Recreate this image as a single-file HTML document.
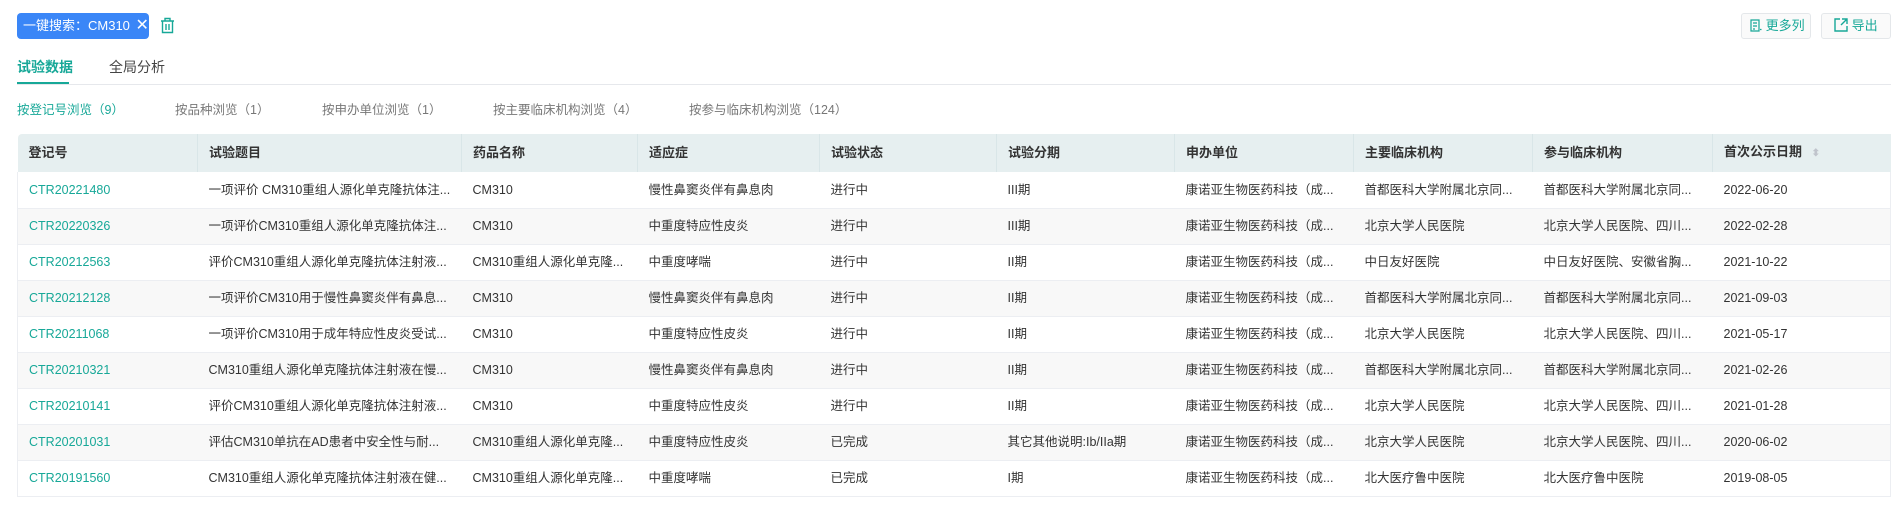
<!DOCTYPE html>
<html><head><meta charset="utf-8"><style>
*{margin:0;padding:0;box-sizing:border-box}
body{width:1903px;height:515px;background:#fff;font-family:"Liberation Sans","Noto Sans CJK SC",sans-serif;color:#333;position:relative;overflow:hidden}
.abs{position:absolute}
.tag{left:17px;top:13px;width:132px;height:26px;background:#3a86f7;border-radius:4px;color:#fff;font-size:13px;line-height:26px;padding-left:6px;white-space:nowrap}
.btn{top:13px;height:26px;border:1px solid #e4e7ea;border-radius:3px;background:#fafafa;color:#17a898;font-size:13px;line-height:24px;white-space:nowrap}
.tab{top:57px;font-size:14px}
.sub{top:99px;font-size:12.5px;color:#777;white-space:nowrap}
table{position:absolute;left:17px;top:134px;width:1873px;border-collapse:collapse;table-layout:fixed;font-size:12.5px}
th{height:38px;background:#e6eff0;text-align:left;font-weight:bold;color:#333;padding-left:11px;border-left:1px solid #d9e6e8;font-size:13px;line-height:18px;vertical-align:middle}
th:first-child{border-left:none;border-top-left-radius:4px}
td{height:36px;padding-left:11px;border-bottom:1px solid #eceef2;white-space:nowrap;overflow:hidden;color:#333;line-height:18px;vertical-align:middle}
td span{display:inline-block;vertical-align:middle;line-height:18px}
tr:nth-child(odd) td{background:#f8f8f8}
td:first-child{color:#17a898;border-left:1px solid #eceef2}
td:last-child{border-right:1px solid #eceef2}
</style></head><body>
<div class="abs tag">一键搜索：CM310 <span style="font-size:16px;margin-left:2px">✕</span></div>
<svg class="abs" style="left:160px;top:17px" width="15" height="17" viewBox="0 0 15 17" fill="none" stroke="#17a898" stroke-width="1.4"><path d="M1 4h13M5 4V1.5h5V4M2.5 4v11.5h10V4M6 7v6M9 7v6"/></svg>
<div class="abs btn" style="left:1741px;width:70px;padding-left:8px"><svg width="12" height="13" viewBox="0 0 12 13" fill="none" stroke="#17a898" stroke-width="1.2" style="vertical-align:-2px"><path d="M1 1h8v11H1zM3 4h4M3 7h4M3 10h2M10 10.5h1.5"/></svg> 更多列</div>
<div class="abs btn" style="left:1821px;width:70px;padding-left:12px"><svg width="14" height="14" viewBox="0 0 14 14" fill="none" stroke="#17a898" stroke-width="1.4" style="vertical-align:-2px"><path d="M6 1H1v12h12V8M8 1h5v5M13 1L7 7"/></svg> 导出</div>
<div class="abs tab" style="left:17px;color:#17a898;font-weight:bold">试验数据</div>
<div class="abs" style="left:17px;top:82px;width:52px;height:3px;background:#17a898"></div>
<div class="abs tab" style="left:109px;color:#444">全局分析</div>
<div class="abs" style="left:17px;top:84px;width:1874px;height:1px;background:#e6e8ec"></div>
<div class="abs sub" style="left:17px;color:#17a898">按登记号浏览（9）</div>
<div class="abs sub" style="left:175px">按品种浏览（1）</div>
<div class="abs sub" style="left:322px">按申办单位浏览（1）</div>
<div class="abs sub" style="left:493px">按主要临床机构浏览（4）</div>
<div class="abs sub" style="left:689px">按参与临床机构浏览（124）</div>
<table>
<colgroup><col style="width:180px"><col style="width:264px"><col style="width:176px"><col style="width:182px"><col style="width:177px"><col style="width:178px"><col style="width:179px"><col style="width:179px"><col style="width:180px"><col style="width:178px"></colgroup>
<tr><th>登记号</th><th>试验题目</th><th>药品名称</th><th>适应症</th><th>试验状态</th><th>试验分期</th><th>申办单位</th><th>主要临床机构</th><th>参与临床机构</th><th>首次公示日期 <span style="color:#c0c4cc;font-size:10px;margin-left:6px">⬍</span></th></tr>
<tr><td><span>CTR20221480</span></td><td><span>一项评价 CM310重组人源化单克隆抗体注...</span></td><td><span>CM310</span></td><td><span>慢性鼻窦炎伴有鼻息肉</span></td><td><span>进行中</span></td><td><span>III期</span></td><td><span>康诺亚生物医药科技（成...</span></td><td><span>首都医科大学附属北京同...</span></td><td><span>首都医科大学附属北京同...</span></td><td><span>2022-06-20</span></td></tr>
<tr><td><span>CTR20220326</span></td><td><span>一项评价CM310重组人源化单克隆抗体注...</span></td><td><span>CM310</span></td><td><span>中重度特应性皮炎</span></td><td><span>进行中</span></td><td><span>III期</span></td><td><span>康诺亚生物医药科技（成...</span></td><td><span>北京大学人民医院</span></td><td><span>北京大学人民医院、四川...</span></td><td><span>2022-02-28</span></td></tr>
<tr><td><span>CTR20212563</span></td><td><span>评价CM310重组人源化单克隆抗体注射液...</span></td><td><span>CM310重组人源化单克隆...</span></td><td><span>中重度哮喘</span></td><td><span>进行中</span></td><td><span>II期</span></td><td><span>康诺亚生物医药科技（成...</span></td><td><span>中日友好医院</span></td><td><span>中日友好医院、安徽省胸...</span></td><td><span>2021-10-22</span></td></tr>
<tr><td><span>CTR20212128</span></td><td><span>一项评价CM310用于慢性鼻窦炎伴有鼻息...</span></td><td><span>CM310</span></td><td><span>慢性鼻窦炎伴有鼻息肉</span></td><td><span>进行中</span></td><td><span>II期</span></td><td><span>康诺亚生物医药科技（成...</span></td><td><span>首都医科大学附属北京同...</span></td><td><span>首都医科大学附属北京同...</span></td><td><span>2021-09-03</span></td></tr>
<tr><td><span>CTR20211068</span></td><td><span>一项评价CM310用于成年特应性皮炎受试...</span></td><td><span>CM310</span></td><td><span>中重度特应性皮炎</span></td><td><span>进行中</span></td><td><span>II期</span></td><td><span>康诺亚生物医药科技（成...</span></td><td><span>北京大学人民医院</span></td><td><span>北京大学人民医院、四川...</span></td><td><span>2021-05-17</span></td></tr>
<tr><td><span>CTR20210321</span></td><td><span>CM310重组人源化单克隆抗体注射液在慢...</span></td><td><span>CM310</span></td><td><span>慢性鼻窦炎伴有鼻息肉</span></td><td><span>进行中</span></td><td><span>II期</span></td><td><span>康诺亚生物医药科技（成...</span></td><td><span>首都医科大学附属北京同...</span></td><td><span>首都医科大学附属北京同...</span></td><td><span>2021-02-26</span></td></tr>
<tr><td><span>CTR20210141</span></td><td><span>评价CM310重组人源化单克隆抗体注射液...</span></td><td><span>CM310</span></td><td><span>中重度特应性皮炎</span></td><td><span>进行中</span></td><td><span>II期</span></td><td><span>康诺亚生物医药科技（成...</span></td><td><span>北京大学人民医院</span></td><td><span>北京大学人民医院、四川...</span></td><td><span>2021-01-28</span></td></tr>
<tr><td><span>CTR20201031</span></td><td><span>评估CM310单抗在AD患者中安全性与耐...</span></td><td><span>CM310重组人源化单克隆...</span></td><td><span>中重度特应性皮炎</span></td><td><span>已完成</span></td><td><span>其它其他说明:Ib/IIa期</span></td><td><span>康诺亚生物医药科技（成...</span></td><td><span>北京大学人民医院</span></td><td><span>北京大学人民医院、四川...</span></td><td><span>2020-06-02</span></td></tr>
<tr><td><span>CTR20191560</span></td><td><span>CM310重组人源化单克隆抗体注射液在健...</span></td><td><span>CM310重组人源化单克隆...</span></td><td><span>中重度哮喘</span></td><td><span>已完成</span></td><td><span>I期</span></td><td><span>康诺亚生物医药科技（成...</span></td><td><span>北大医疗鲁中医院</span></td><td><span>北大医疗鲁中医院</span></td><td><span>2019-08-05</span></td></tr>
</table>
</body></html>
